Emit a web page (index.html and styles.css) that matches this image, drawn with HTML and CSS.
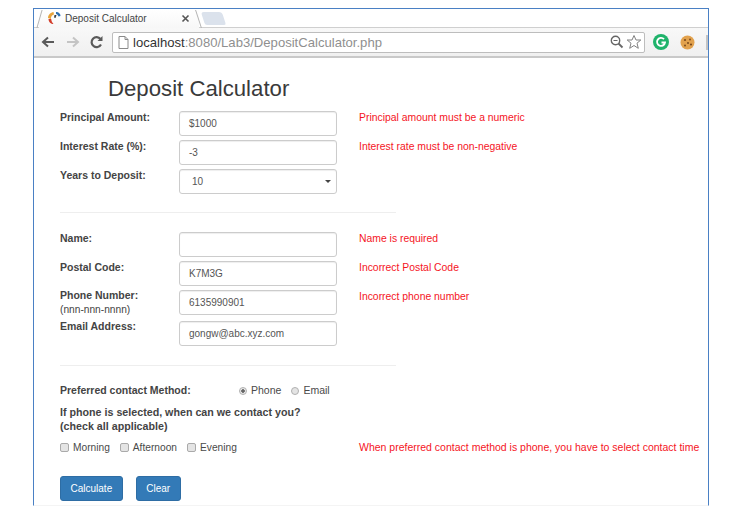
FILE: index.html
```html
<!DOCTYPE html>
<html lang="en">
<head>
<meta charset="utf-8">
<title>Deposit Calculator</title>
<link rel="stylesheet" href="styles.css">
</head>
<body>
<div class="window">
  <div class="tabbar">
    <div class="tab">
      <svg class="favicon" width="14" height="14" viewBox="0 0 14 14"><path d="M1 7C1 4 3.500 1.500 6.500 1L7 3.500C5 4 3.800 5.500 4 8Z" fill="#e8a33a"/><path d="M1.500 8L4.200 8C4.500 10 5 11.500 6.500 13C4 13 1.500 11 1.500 8Z" fill="#d23c2a"/><path d="M9 1L10 1C12 1.500 13.500 3 13.500 5L11.500 5.500C11 4 10 3 9 3Z" fill="#2c6fb0"/><path d="M7.500 4L9.500 4L8.500 7L7 6.500Z" fill="#3a3a3a"/></svg>
      <span class="tab-title">Deposit Calculator</span>
      <svg class="tab-close" width="9" height="9" viewBox="0 0 9 9"><path d="M1.500 1.500L7.500 7.500M7.500 1.500L1.500 7.500" stroke="#555" stroke-width="1.600"/></svg>
    </div>
    <div class="newtab"></div>
  </div>
  <div class="toolbar">
    <svg class="nav nav-back" width="16" height="14" viewBox="0 0 16 14"><path d="M14 7H4M8 2.500L3 7L8 11.500" fill="none" stroke="#5a5a5a" stroke-width="2"/></svg>
    <svg class="nav" width="16" height="14" viewBox="0 0 16 14"><path d="M2 7H12M8 2.500L13 7L8 11.500" fill="none" stroke="#c4c4c4" stroke-width="2"/></svg>
    <svg class="nav" width="15" height="15" viewBox="0 0 15 15"><path d="M12 9.500A5 5 0 1 1 11.500 4" fill="none" stroke="#5a5a5a" stroke-width="2.200"/><path d="M8.500 6H13.500V1Z" fill="#5a5a5a"/></svg>
    <div class="omnibox">
      <svg class="page-icon" width="11" height="13" viewBox="0 0 11 13"><path d="M1 .5H7L10 3.500V12.500H1ZM7 .5V3.500H10" fill="#fff" stroke="#8a8a8a"/></svg>
      <span class="url"><span class="host">localhost</span>:8080/Lab3/DepositCalculator.php</span>
      <svg class="zoom-icon" width="14" height="14" viewBox="0 0 14 14"><circle cx="5.500" cy="5.500" r="4.200" fill="none" stroke="#666" stroke-width="1.400"/><path d="M3.500 5.500H7.500" stroke="#666"/><path d="M8.500 8.500L12.500 12.500" stroke="#666" stroke-width="1.800"/></svg>
      <svg class="star-icon" width="16" height="16" viewBox="0 0 16 16"><path d="M8 1.500L10 6H14.800L11 9.200L12.300 14.300L8 11.500L3.700 14.300L5 9.200L1.200 6H6Z" fill="#fff" stroke="#808080"/></svg>
    </div>
    <svg class="ext-g" width="16" height="16" viewBox="0 0 16 16"><circle cx="8" cy="8" r="8" fill="#1fb36b"/><path d="M11 5.200A4 4 0 1 0 12 8.500H8.500" fill="none" stroke="#fff" stroke-width="1.800"/></svg>
    <svg class="ext-c" width="15" height="15" viewBox="0 0 15 15"><circle cx="7.500" cy="7.500" r="7" fill="#e2a24e"/><circle cx="5" cy="5" r="1.100" fill="#7a4a1e"/><circle cx="10" cy="4.500" r=".9" fill="#7a4a1e"/><circle cx="8" cy="8" r="1" fill="#7a4a1e"/><circle cx="11" cy="9.500" r="1.100" fill="#7a4a1e"/><circle cx="5" cy="10.500" r="1" fill="#7a4a1e"/></svg>
    <div class="ext-menu"></div>
  </div>
  <main class="page">
    <h1 class="title">Deposit Calculator</h1>
    <form class="form">
      <div class="row">
        <label class="label">Principal Amount:</label>
        <div class="field">$1000</div>
        <span class="error">Principal amount must be a numeric</span>
      </div>
      <div class="row row-b">
        <label class="label">Interest Rate (%):</label>
        <div class="field">-3</div>
        <span class="error">Interest rate must be non-negative</span>
      </div>
      <div class="row row-b">
        <label class="label">Years to Deposit:</label>
        <div class="field field-select">10<span class="caret"></span></div>
      </div>
      <hr class="rule rule-one">
      <div class="row">
        <label class="label">Name:</label>
        <div class="field"></div>
        <span class="error">Name is required</span>
      </div>
      <div class="row row-b">
        <label class="label">Postal Code:</label>
        <div class="field">K7M3G</div>
        <span class="error">Incorrect Postal Code</span>
      </div>
      <div class="row row-c">
        <label class="label label-tight">Phone Number:<small class="hint">(nnn-nnn-nnnn)</small></label>
        <div class="field">6135990901</div>
        <span class="error">Incorrect phone number</span>
      </div>
      <div class="row row-d">
        <label class="label label-tight">Email Address:</label>
        <div class="field">gongw@abc.xyz.com</div>
      </div>
      <hr class="rule rule-two">
      <div class="method">
        <b class="method-label">Preferred contact Method:</b>
        <span class="opt opt-radio"><span class="radio radio-on"></span>Phone</span>
        <span class="opt opt-radio"><span class="radio"></span>Email</span>
      </div>
      <p class="question">If phone is selected, when can we contact you?<br>(check all applicable)</p>
      <div class="times">
        <div class="checks">
          <span class="opt"><span class="check"></span>Morning</span>
          <span class="opt"><span class="check"></span>Afternoon</span>
          <span class="opt"><span class="check"></span>Evening</span>
        </div>
        <span class="error error-long">When preferred contact method is phone, you have to select contact time</span>
      </div>
      <div class="buttons">
        <button type="button" class="btn">Calculate</button>
        <button type="button" class="btn">Clear</button>
      </div>
    </form>
  </main>
</div>
</body>
</html>
```
FILE: styles.css
```css
* { box-sizing: border-box; }
html, body { margin: 0; height: 514px; overflow: hidden; background: #fff; }
body { font-family: "Liberation Sans", Arial, sans-serif; font-size: 10.5px; color: #333; }

.window {
  margin: 8px 0 0 33px;
  width: 676px;
  height: 498px;
  border: 1px solid #4a80c4;
  border-bottom-color: #f4f4f4;
  overflow: hidden;
}

.tabbar { height: 19px; display: flex; align-items: flex-end; background: #fff; border-bottom: 1px solid #cfcfcf; padding-left: 5px; }
.tab {
  position: relative;
  width: 160px; height: 18px; margin-bottom: -1px; display: flex; align-items: center;
  padding: 0 9px 2px 8px;
  background: linear-gradient(#fff, #f7f7f7);
}
.tab::before, .tab::after {
  content: ""; position: absolute; top: 0; bottom: 0; width: 1px; background: #b4b4b4;
}
.tab::before { left: 0; transform: skewX(-16deg); }
.tab::after { right: 0; transform: skewX(18deg); }
.favicon { flex: none; margin-right: 4px; }
.tab-title { flex: 1; font-size: 10px; color: #444; white-space: nowrap; }
.tab-close { flex: none; }
.newtab { width: 21px; height: 13px; margin-left: 4px; margin-bottom: 2px; background: #dbe2ec; border-radius: 3px 3px 2px 2px; transform: skewX(18deg); }

.toolbar { height: 30px; display: flex; align-items: center; padding-left: 6px; background: linear-gradient(#f8f8f8, #f0f0f0); border-bottom: 2px solid #c9c9c9; }
.nav { flex: none; margin-right: 8px; }
.nav-back { margin-right: 9px; }
.omnibox {
  flex: none; width: 533px; height: 21px; display: flex; align-items: center;
  padding: 0 2px 0 5px; background: #fff; border: 1px solid #bdbdbd; border-radius: 2px;
}
.page-icon { flex: none; margin-right: 4px; }
.url { flex: 1; font-size: 13.100px; color: #8f8f8f; white-space: nowrap; }
.host { color: #333; }
.zoom-icon { flex: none; margin-right: 2px; }
.star-icon { flex: none; }
.ext-g { flex: none; margin-left: 8px; }
.ext-c { flex: none; margin-left: 11px; }
.ext-menu { flex: none; width: 3px; height: 15px; margin-left: 11px; background: #c4c4c4; }

.page { padding: 0 0 0 26px; }
.title { margin: 0; padding: 16px 0 0 48px; font-size: 22.200px; line-height: 30px; font-weight: 400; color: #3a3a3a; height: 53px; }

.row { display: flex; height: 25px; align-items: flex-start; }
.row-b { margin-top: 4px; }
.row-c { margin-top: 4px; }
.row-d { margin-top: 6px; }

.label { flex: none; width: 119px; font-size: 10.500px; font-weight: 700; line-height: 13px; color: #444; }
.label-tight { margin-top: -1px; }
.hint { display: block; font-size: 10.200px; font-weight: 400; line-height: 13px; margin-top: 1px; }

.field {
  flex: none; width: 157.500px; height: 25px; padding: 0 9px;
  display: flex; align-items: center;
  font-size: 10px; color: #555; background: #fff;
  border: 1px solid #ccc; border-radius: 3px;
  box-shadow: inset 0 1px 1px rgba(0,0,0,.07);
}
.field-select { padding-left: 12px; padding-right: 5px; justify-content: space-between; }
.caret { width: 0; height: 0; border: 3px solid transparent; border-top: 3.500px solid #444; border-bottom: 0; }
.error { margin-left: 22.500px; font-size: 10.400px; line-height: 13px; color: #f5141e; white-space: nowrap; }
.error-long { font-size: 10.500px; margin-left: 23px; }

.rule { margin: 0; width: 336px; height: 1px; border: 0; background: #eee; }
.rule-one { margin-top: 18px; margin-bottom: 19px; }
.rule-two { margin-top: 19px; }

.method { display: flex; align-items: center; margin-top: 18px; height: 13px; line-height: 13px; }
.method-label { width: 179px; font-size: 10.500px; color: #444; }
.opt { display: inline-flex; align-items: center; font-size: 10.200px; color: #4a4a4a; margin-right: 10px; }
.opt-radio { font-size: 10.500px; }
.radio { width: 8px; height: 8px; margin-right: 4px; border-radius: 50%; background: #e4e4e4; border: 1px solid #b0b0b0; }
.radio-on { background: radial-gradient(circle, #666 0 1.500px, #e8e8e8 2px); }
.question { margin: 8px 0 0; font-size: 10.700px; font-weight: 700; line-height: 14px; color: #444; }

.times { display: flex; align-items: center; margin-top: 7px; height: 14px; }
.checks { width: 276px; flex: none; display: flex; }
.check { width: 9px; height: 9px; margin-right: 4px; background: #e4e4e4; border: 1px solid #aaa; border-radius: 2px; }

.buttons { display: flex; gap: 13px; margin-top: 22px; }
.btn {
  height: 25px; padding: 0 9.500px; font-family: inherit; font-size: 10px; color: #fff;
  background: #337ab7; border: 1px solid #2e6da4; border-radius: 3px;
}
```
